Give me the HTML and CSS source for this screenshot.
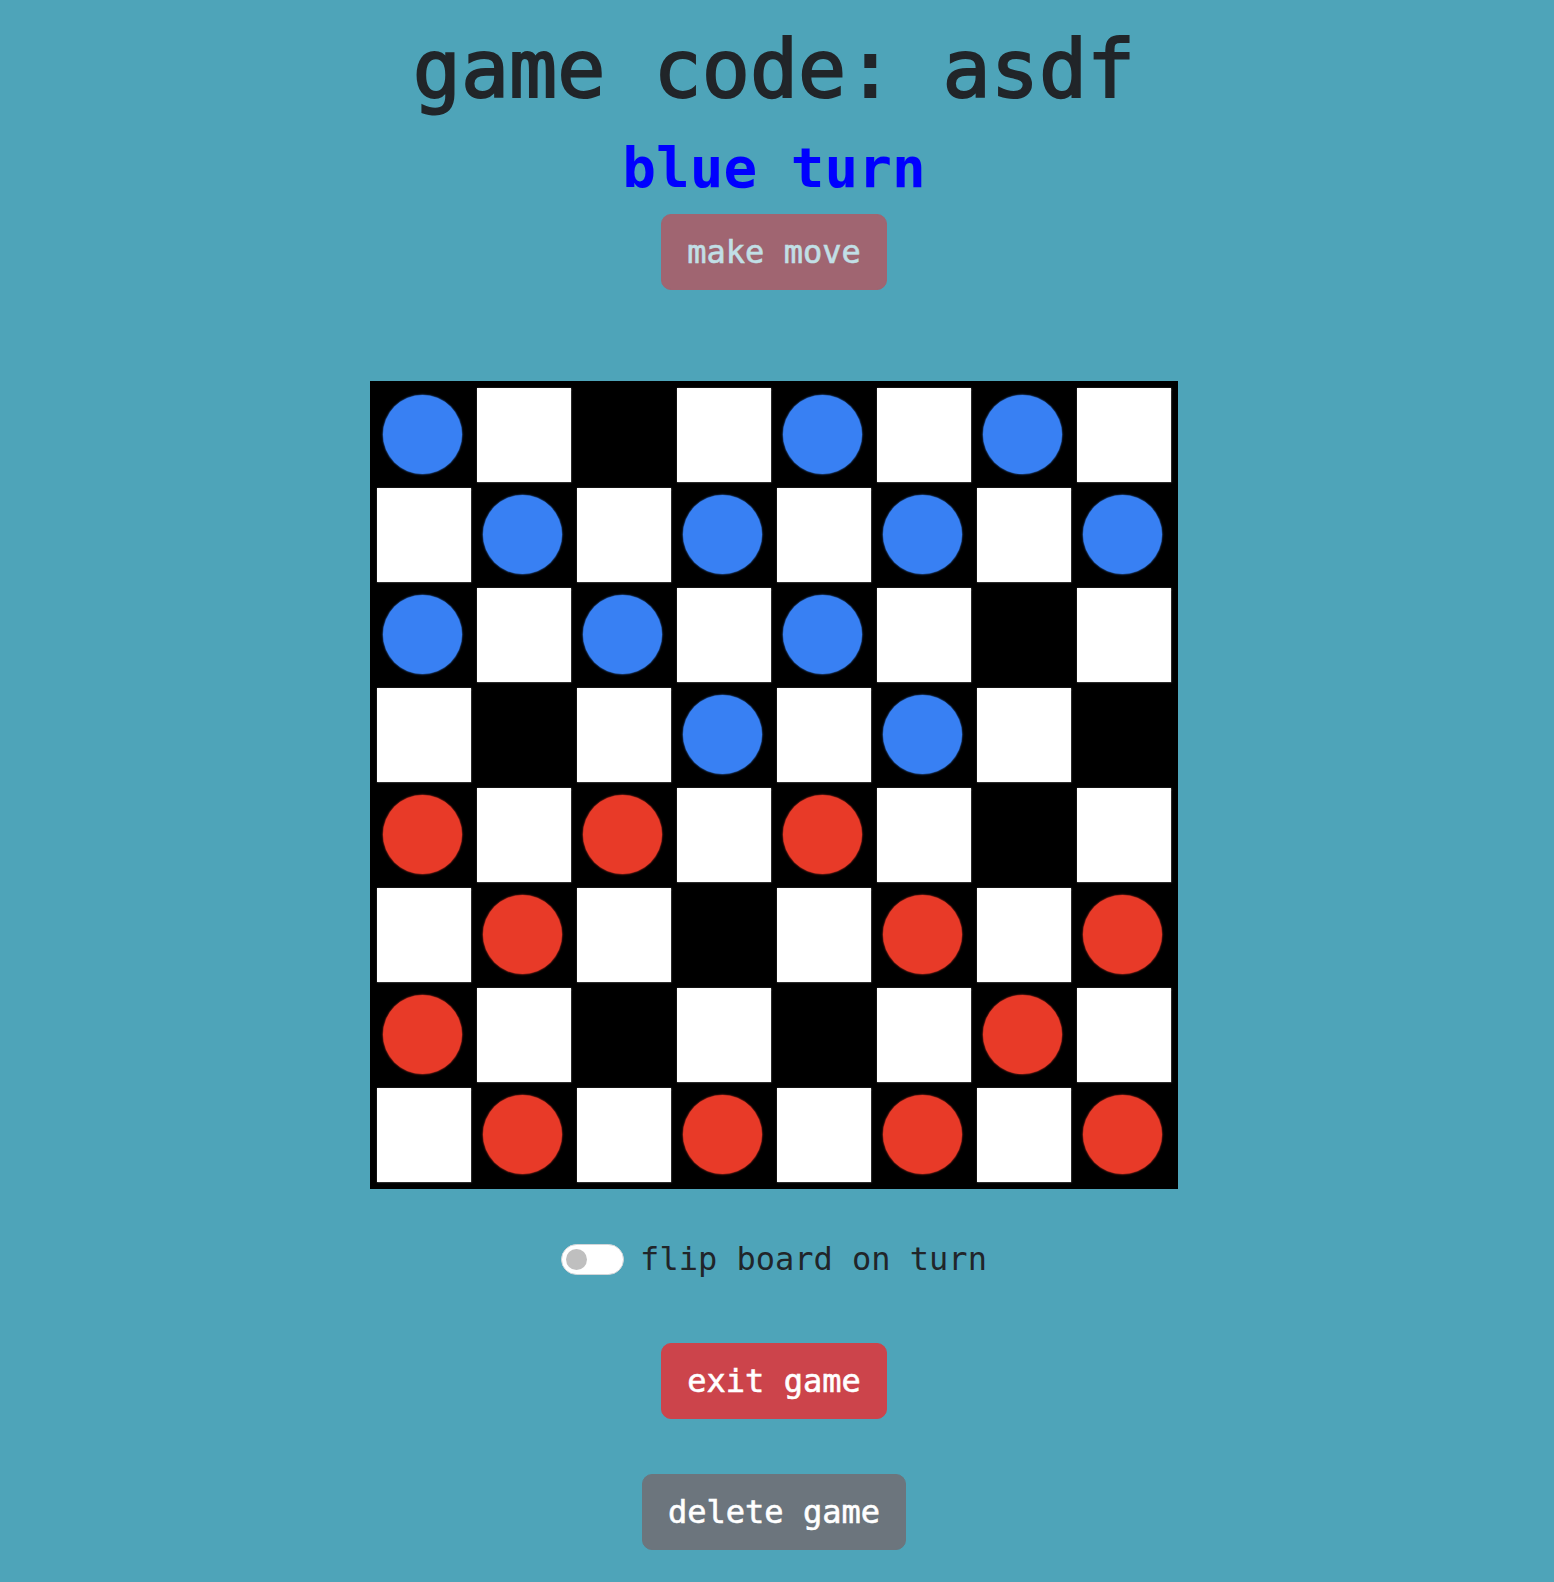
FILE: index.html
```html
<!DOCTYPE html>
<html lang="en">
<head>
<meta charset="utf-8">
<title>checkers</title>
<link rel="stylesheet" href="styles.css">
</head>
<body>
<main class="page">
  <h1 class="title">game code: asdf</h1>
  <div class="turn">blue turn</div>
  <button class="btn btn-danger disabled" type="button">make move</button>

  <div class="board">
    <div class="sq dark"><span class="piece blue"></span></div><div class="sq light"></div><div class="sq dark"></div><div class="sq light"></div><div class="sq dark"><span class="piece blue"></span></div><div class="sq light"></div><div class="sq dark"><span class="piece blue"></span></div><div class="sq light"></div>
    <div class="sq light"></div><div class="sq dark"><span class="piece blue"></span></div><div class="sq light"></div><div class="sq dark"><span class="piece blue"></span></div><div class="sq light"></div><div class="sq dark"><span class="piece blue"></span></div><div class="sq light"></div><div class="sq dark"><span class="piece blue"></span></div>
    <div class="sq dark"><span class="piece blue"></span></div><div class="sq light"></div><div class="sq dark"><span class="piece blue"></span></div><div class="sq light"></div><div class="sq dark"><span class="piece blue"></span></div><div class="sq light"></div><div class="sq dark"></div><div class="sq light"></div>
    <div class="sq light"></div><div class="sq dark"></div><div class="sq light"></div><div class="sq dark"><span class="piece blue"></span></div><div class="sq light"></div><div class="sq dark"><span class="piece blue"></span></div><div class="sq light"></div><div class="sq dark"></div>
    <div class="sq dark"><span class="piece red"></span></div><div class="sq light"></div><div class="sq dark"><span class="piece red"></span></div><div class="sq light"></div><div class="sq dark"><span class="piece red"></span></div><div class="sq light"></div><div class="sq dark"></div><div class="sq light"></div>
    <div class="sq light"></div><div class="sq dark"><span class="piece red"></span></div><div class="sq light"></div><div class="sq dark"></div><div class="sq light"></div><div class="sq dark"><span class="piece red"></span></div><div class="sq light"></div><div class="sq dark"><span class="piece red"></span></div>
    <div class="sq dark"><span class="piece red"></span></div><div class="sq light"></div><div class="sq dark"></div><div class="sq light"></div><div class="sq dark"></div><div class="sq light"></div><div class="sq dark"><span class="piece red"></span></div><div class="sq light"></div>
    <div class="sq light"></div><div class="sq dark"><span class="piece red"></span></div><div class="sq light"></div><div class="sq dark"><span class="piece red"></span></div><div class="sq light"></div><div class="sq dark"><span class="piece red"></span></div><div class="sq light"></div><div class="sq dark"><span class="piece red"></span></div>
  </div>

  <label class="switch-row">
    <span class="switch"><span class="knob"></span></span>
    <span class="switch-label">flip board on turn</span>
  </label>

  <button class="btn btn-danger exit" type="button">exit game</button>
  <button class="btn btn-secondary delete" type="button">delete game</button>
</main>
</body>
</html>
```
FILE: styles.css
```css
html, body {
  margin: 0;
  padding: 0;
}

body {
  background: #4ea4b9;
  color: #212529;
  font-family: "DejaVu Sans Mono", "Liberation Mono", monospace;
}

.page {
  display: flex;
  flex-direction: column;
  align-items: center;
  padding: 22px 6px 0 0;
}

.title {
  margin: 0;
  font-size: 80px;
  line-height: 96px;
  font-weight: normal;
  color: #212529;
  -webkit-text-stroke: 2px #212529;
}

.turn {
  margin-top: 16px;
  font-size: 56px;
  line-height: 67px;
  font-weight: bold;
  color: #0000ff;
}

.btn {
  box-sizing: border-box;
  font-family: inherit;
  font-size: 32px;
  line-height: 48px;
  padding: 13px 25px;
  border: 1px solid transparent;
  border-radius: 10px;
  color: #fff;
  -webkit-text-stroke: 0.6px currentColor;
  cursor: pointer;
}

.btn-danger {
  background: #cc444b;
  border-color: #cc444b;
}

.btn-secondary {
  background: #6c757d;
  border-color: #6c757d;
}

.disabled {
  opacity: 0.65;
  margin-top: 13px;
}

.board {
  margin-top: 91px;
  background: #000;
  padding: 4px;
  display: grid;
  grid-template-columns: repeat(8, 100px);
  grid-template-rows: repeat(8, 100px);
}

.sq {
  display: flex;
  align-items: center;
  justify-content: center;
}

.sq.light::before {
  content: "";
  width: 94px;
  height: 94px;
  background: #fff;
  box-shadow: 0 0 1.5px 0.5px #8a8a8a;
}

.piece {
  width: 79px;
  height: 79px;
  border-radius: 50%;
  margin: -2px 0 0 -3px;
}

.piece.blue {
  background: #3880f3;
  box-shadow: 0 0 1.5px 0.5px #2a5fb0;
}

.piece.red {
  background: #e83a28;
  box-shadow: 0 0 1.5px 0.5px #a82a1e;
}

.switch-row {
  margin-top: 46px;
  display: flex;
  align-items: center;
  gap: 16px;
}

.switch {
  box-sizing: border-box;
  width: 63px;
  height: 31px;
  border: 1.5px solid #d3d6d9;
  border-radius: 16px;
  background: #fff;
  display: flex;
  align-items: center;
  padding-left: 4px;
}

.knob {
  width: 21px;
  height: 21px;
  border-radius: 50%;
  background: #bfbfbf;
}

.switch-label {
  font-size: 32px;
  line-height: 48px;
  color: #212529;
}

.exit {
  margin-top: 60px;
}

.delete {
  margin-top: 55px;
}
```
